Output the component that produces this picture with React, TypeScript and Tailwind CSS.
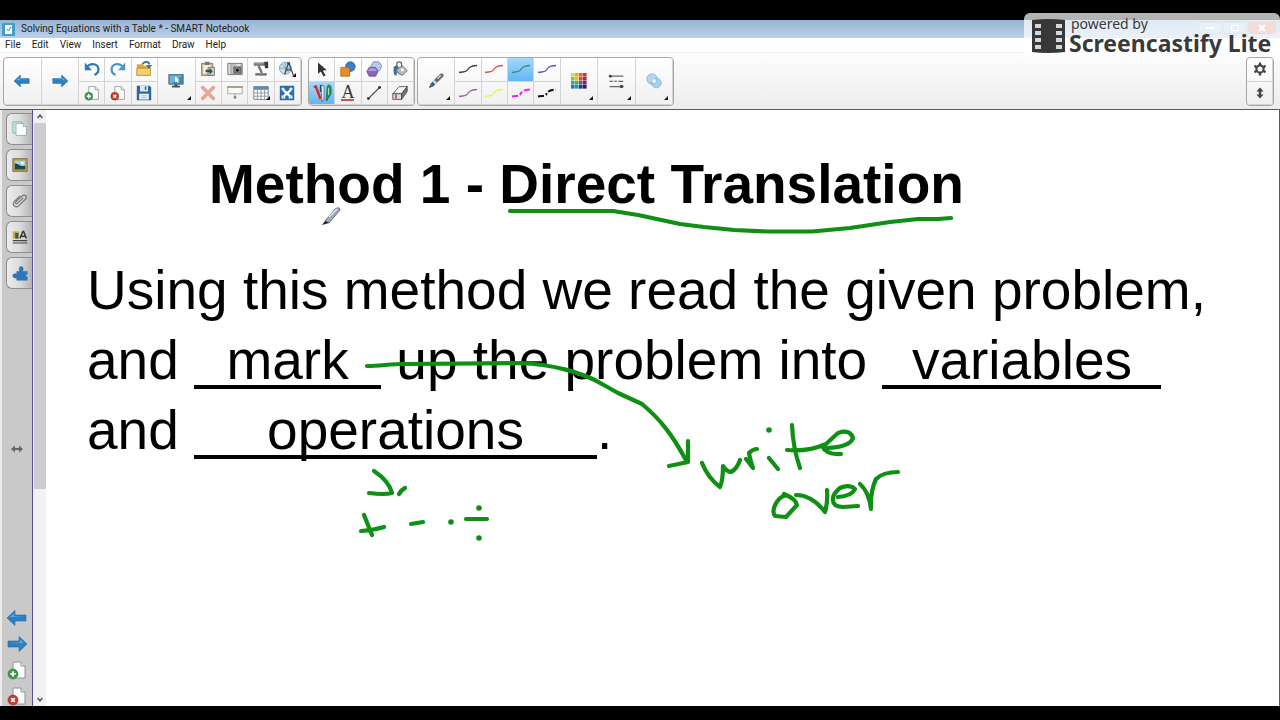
import React from 'react'

const MENUS = ['File', 'Edit', 'View', 'Insert', 'Format', 'Draw', 'Help']

const PENS = [
  { name: 'Black pen', color: '#3f3f3f' },
  { name: 'Purple pen', color: '#9a5fae' },
  { name: 'Red pen', color: '#e0524a' },
  { name: 'Yellow pen', color: '#eeee58' },
  { name: 'Green pen', color: '#2b9683', active: true },
  { name: 'Magenta dashed pen', color: '#ee22e4', dash: '6 2 4 2' },
  { name: 'Blue pen', color: '#5a50d8' },
  { name: 'Black dashed pen', color: '#111111', dash: '6 2 2 2' },
]

const PALETTE = [
  '#e8d32c', '#f0a030', '#e8662c', '#d03038',
  '#8cc83c', '#e8c040', '#d84848', '#a82850',
  '#30a8a0', '#40b060', '#8848a0', '#702878',
  '#2870c0', '#2890c8', '#283890', '#301860',
]

type IconProps = { children: React.ReactNode; size?: 'sm' | 'lg' }

function Icon({ children, size = 'sm' }: IconProps) {
  return (
    <svg viewBox="0 0 20 20" aria-hidden="true" className={size === 'lg' ? 'w-5 h-5' : 'w-4 h-4'}>
      {children}
    </svg>
  )
}

function Arrow({ flip = false, size }: { flip?: boolean; size?: 'sm' | 'lg' }) {
  return (
    <Icon size={size}>
      <path
        d={flip ? 'M20 10 12 2.500V7H1v6h11v4.500z' : 'M0 10 8 2.500V7h11v6H8v4.500z'}
        fill="#2e7fc4"
        stroke="#2468a4"
        strokeWidth=".6"
      />
      <path d={flip ? 'M2 8.300h11V5.500l3.500 3.500z' : 'M18 8.300H7V5.500L3 9z'} fill="#67aee0" />
    </Icon>
  )
}

function PageIcon({ remove = false, size }: { remove?: boolean; size?: 'sm' | 'lg' }) {
  return (
    <Icon size={size}>
      <path d="M6 2h8l4 4v12H6z" fill="#fdfdfd" stroke="#8b949a" />
      <path d="M14 2v4h4" fill="#e4e8ea" stroke="#8b949a" />
      <circle cx="6" cy="14" r="5" fill={remove ? '#c8392f' : '#3c9a50'} stroke={remove ? '#9f2c26' : '#2c7a3c'} strokeWidth=".6" />
      <path
        d={remove ? 'M4.200 12.200l3.600 3.600M7.800 12.200l-3.600 3.600' : 'M6 11.200v5.600M3.200 14h5.600'}
        stroke="#fff"
        strokeWidth="1.700"
      />
    </Icon>
  )
}

function Cell({ label, big, active, more, children }: {
  label: string
  big?: boolean
  active?: boolean
  more?: boolean
  children: React.ReactNode
}) {
  return (
    <button
      type="button"
      aria-label={label}
      className={`relative flex items-center justify-center border-r border-b border-[#d4d4d4] ${
        big ? 'row-span-2' : ''
      } ${active ? 'bg-gradient-to-b from-[#a4d8fa] to-[#62b6f4]' : ''}`}
    >
      {children}
      {more && (
        <svg viewBox="0 0 4 4" aria-hidden="true" className="absolute right-1 bottom-1 w-1 h-1">
          <path d="M4 0v4H0z" fill="#111" />
        </svg>
      )}
    </button>
  )
}

const GROUP = 'grid grid-flow-col grid-rows-2 h-[49px] shrink-0 overflow-hidden rounded border border-[#a6a6a6] bg-gradient-to-b from-white to-[#f0f0f0]'

function FileTools() {
  return (
    <div className={`${GROUP} w-[299px] grid-cols-[37fr_37fr_26fr_26fr_26fr_37fr_26fr_26fr_26fr_26fr]`}>
      <Cell label="Previous page" big><Arrow /></Cell>
      <Cell label="Next page" big><Arrow flip /></Cell>
      <Cell label="Undo">
        <Icon>
          <path d="M4 7C8.500 1.500 18 3.500 18 10.500c0 3-2 5.500-5 7" fill="none" stroke="#2e78b8" strokeWidth="2.800" />
          <path d="M1 2v9.500h9z" fill="#2e78b8" />
        </Icon>
      </Cell>
      <Cell label="Add page"><PageIcon /></Cell>
      <Cell label="Redo">
        <Icon>
          <path d="M16 7C11.500 1.500 2 3.500 2 10.500c0 3 2 5.500 5 7" fill="none" stroke="#4a94cc" strokeWidth="2.800" />
          <path d="M19 2v9.500h-9z" fill="#4a94cc" />
        </Icon>
      </Cell>
      <Cell label="Delete page"><PageIcon remove /></Cell>
      <Cell label="Open">
        <Icon>
          <path d="M1 4h7l2 2h7v12H1z" fill="#d9a83c" />
          <path d="M1 9h17v9H1z" fill="#f4d36c" stroke="#b98a2c" />
          <path d="M8 4c3-4 7-4 9 0" fill="none" stroke="#2e78b8" strokeWidth="2.400" />
          <path d="M12.500 5H20l-3.500 5z" fill="#2e78b8" />
        </Icon>
      </Cell>
      <Cell label="Save">
        <Icon>
          <path d="M1 1h16l2 2v16H1z" fill="#2f669c" />
          <path d="M5 1h10v7H5z" fill="#dce9f4" />
          <path d="M11 2h2v4h-2z" fill="#2f669c" />
          <path d="M4 11h12v7H4z" fill="#f4f7fa" />
          <path d="M6 13.500h8M6 16h8" stroke="#9ab4cc" />
        </Icon>
      </Cell>
      <Cell label="View screens" big more>
        <Icon>
          <path d="M1 2h18v12H1z" fill="#3e88b4" stroke="#4d6270" />
          <path d="M2 3h16L5 13H2z" fill="#71b3d6" />
          <path d="M9 4v8l2-1.500 1 2 1.500-1-1-2h2z" fill="#fff" />
          <path d="M8 14h4v2h3v2H5v-2h3z" fill="#41525e" />
        </Icon>
      </Cell>
      <Cell label="Paste">
        <Icon>
          <path d="M2 3h14v15H2z" fill="#cdb78e" stroke="#7d6c50" />
          <path d="M4 5h10v11H4z" fill="#f2efe6" />
          <path d="M6 1h6v4H6z" fill="#777" />
          <path d="M10 8h8v10h-8z" fill="#c9d2ca" stroke="#666" />
          <path d="M7 11h5V8.500l4 4.500-4 4v-3H7z" fill="#3d4b40" />
        </Icon>
      </Cell>
      <Cell label="Delete">
        <Icon>
          <path d="M2 2l16 16M18 2L2 18" stroke="#e6a498" strokeWidth="4.400" />
        </Icon>
      </Cell>
      <Cell label="Screen capture">
        <Icon>
          <path d="M1 3h18v14H1z" fill="#bdbdbd" stroke="#666" />
          <path d="M2 4h4v12H2z" fill="#e2e2e2" />
          <path d="M5 4v12" stroke="#777" />
          <path d="M8 7h10v9H8z" fill="#6a6a6a" />
          <circle cx="13" cy="11.500" r="2.600" fill="#191919" stroke="#aaa" />
          <path d="M12 4h5v2h-5z" fill="#eee" />
        </Icon>
      </Cell>
      <Cell label="Screen shade">
        <Icon>
          <path d="M1 2h18v9H1z" fill="#fafafa" stroke="#9a9a88" />
          <path d="M0 2.500h20" stroke="#a8a48c" strokeWidth="2.400" />
          <path d="M10 11v5" stroke="#888" />
          <path d="M8.500 14h3v3h-3z" fill="#777" />
        </Icon>
      </Cell>
      <Cell label="Document camera">
        <Icon>
          <path d="M1 2h17v4H1z" fill="#6e6e6e" />
          <path d="M14 1h5v8h-4z" fill="#3a3a3a" />
          <path d="M7 6l4 9" stroke="#777" strokeWidth="3" />
          <path d="M3 15h14v3H3z" fill="#5a5a5a" />
          <path d="M2 3.500h11M4 16h12" stroke="#b8b8b8" />
        </Icon>
      </Cell>
      <Cell label="Table" more>
        <Icon>
          <path d="M1 2h18v16H1z" fill="#fff" stroke="#66747e" />
          <path d="M1 2h18v4H1z" fill="#5b8bb2" />
          <path d="M1 10h18M1 14h18M5.500 2v16M10 2v16M14.500 2v16" stroke="#7c8b96" />
        </Icon>
      </Cell>
      <Cell label="Measurement tools" more>
        <Icon>
          <circle cx="8" cy="9" r="7.500" fill="#c9e0ee" stroke="#6c9ab8" />
          <path d="M1 9h14M8 2v14M4 4l8 10" stroke="#7ba6c2" />
          <path d="M12 2L7 17M12 2l6 16M9 11h7" fill="none" stroke="#3f4a52" strokeWidth="1.600" />
          <circle cx="12" cy="3" r="1.800" fill="#444" />
        </Icon>
      </Cell>
      <Cell label="SMART Exchange">
        <Icon>
          <path d="M1 1h18v18H1z" fill="#2f6da6" />
          <path d="M5.500 6.500l9 8M14.500 6.500l-9 8" stroke="#fff" strokeWidth="3" />
          <circle cx="5" cy="5" r="2" fill="#e8f2fa" />
          <circle cx="15" cy="5" r="2" fill="#e8f2fa" />
          <path d="M4 13v3h4M16 13v3h-4" fill="none" stroke="#fff" strokeWidth="1.600" />
        </Icon>
      </Cell>
    </div>
  )
}

function DrawTools() {
  return (
    <div className={`${GROUP} w-[107px] grid-cols-4`}>
      <Cell label="Select">
        <Icon>
          <path d="M5 2v14l3.500-3L12 19.500l2.500-1.500-3.500-6 5-.5z" fill="#333" />
        </Icon>
      </Cell>
      <Cell label="Pens" active>
        <Icon size="lg">
          <path d="M3 2.500L8 16" stroke="#b8323c" strokeWidth="3.400" />
          <path d="M2.500 5l4 11" stroke="#f0c8cc" />
          <path d="M9 2l3 1v13l-2 3z" fill="#eef2f6" stroke="#5a6676" strokeWidth=".8" />
          <path d="M8.500 2v7" stroke="#2c4a6c" strokeWidth="1.400" />
          <path d="M15 5c0-4 4-4 4 0v6l-4.500 7z" fill="#249a5c" stroke="#12623a" strokeWidth=".8" />
          <path d="M16.500 5v7" stroke="#9ae4ba" />
        </Icon>
      </Cell>
      <Cell label="Shapes">
        <Icon>
          <circle cx="13" cy="7" r="6" fill="#3a80c0" stroke="#2a5f94" />
          <path d="M1 8h11v11H1z" fill="#ee8a28" stroke="#b8601c" />
        </Icon>
      </Cell>
      <Cell label="Text">
        <span className="border-b-2 border-[#cc5450] font-['Liberation_Serif',serif] text-[18px] leading-[14px] text-[#383838]">A</span>
      </Cell>
      <Cell label="Regular polygons">
        <Icon>
          <path d="M9 1h7l4 5-3 6h-7L6 7z" fill="#b9c8ec" stroke="#7083b8" />
          <path d="M4 8h8l3 5-3 6H4l-3-6z" fill="#8a68b8" stroke="#644a92" />
          <path d="M4.500 9h7l2 3.500h-11z" fill="#b49ad8" />
        </Icon>
      </Cell>
      <Cell label="Line">
        <Icon>
          <path d="M3 17L17 3" stroke="#444" strokeWidth="1.600" />
          <circle cx="3" cy="17" r="1.800" fill="#333" />
          <circle cx="17" cy="3" r="1.800" fill="#333" />
        </Icon>
      </Cell>
      <Cell label="Fill">
        <Icon>
          <path d="M6 8V4a3 3 0 016 0v5" fill="none" stroke="#666" strokeWidth="1.600" />
          <path d="M6 10l7-4 6 6-6 6-6-3z" fill="#b4babd" stroke="#5c6468" />
          <circle cx="13" cy="11" r="2" fill="#f2f4f5" />
          <path d="M2 8c3-4 7-2 6 1l-2 1v8c-3 0-4-2-4-5z" fill="#3f6e96" />
        </Icon>
      </Cell>
      <Cell label="Eraser">
        <Icon>
          <path d="M1 11L9 2h10l-7 9z" fill="#f2f2f2" stroke="#444" />
          <path d="M1 11h11v7H1z" fill="#ddd" stroke="#444" />
          <path d="M12 11l7-9v6l-7 10z" fill="#777" stroke="#444" />
          <path d="M5 12v5" stroke="#b5483c" strokeWidth="2" />
        </Icon>
      </Cell>
    </div>
  )
}

function PenTools() {
  return (
    <div className={`${GROUP} w-[257px] grid-cols-[37fr_26fr_26fr_26fr_26fr_37fr_37fr_37fr]`}>
      <Cell label="Pen" big more>
        <Icon>
          <path d="M4.500 15.500L14 6" stroke="#2d5c96" strokeWidth="4.600" />
          <path d="M11 9l6-6" stroke="#6a6a6a" strokeWidth="5" strokeLinecap="round" />
          <path d="M12 7l4-4" stroke="#e4e4e4" strokeWidth="1.600" />
          <path d="M7 10l3 3" stroke="#dfe6ee" strokeWidth="3" />
          <path d="M1 19l2-5 3 3z" fill="#555" />
        </Icon>
      </Cell>
      {PENS.map((pen) => (
        <Cell key={pen.name} label={pen.name} active={pen.active}>
          <svg viewBox="0 0 20 10" aria-hidden="true" className="w-5 h-[10px]">
            <path
              d="M1 8.500c4-1 7 0 8.500-2.500S12 2 19 1.500"
              fill="none"
              stroke={pen.color}
              strokeWidth={pen.dash ? 2 : 1.4}
              strokeDasharray={pen.dash}
            />
          </svg>
        </Cell>
      ))}
      <Cell label="Colour" big more>
        <svg viewBox="0 0 16 16" aria-hidden="true" className="w-4 h-4">
          {PALETTE.map((c, i) => (
            <rect key={i} x={(i % 4) * 4} y={Math.floor(i / 4) * 4} width="3.600" height="3.600" fill={c} />
          ))}
        </svg>
      </Cell>
      <Cell label="Line style" big more>
        <Icon>
          <path d="M2 4h17M2 10.500h17M2 17h17" stroke="#666" strokeWidth="1.600" />
          <circle cx="3" cy="4" r="1.800" fill="#444" />
          <circle cx="17" cy="17" r="2.200" fill="#444" />
          <path d="M6 10.500h2M11 10.500h2" stroke="#fff" strokeWidth="1.800" />
        </Icon>
      </Cell>
      <Cell label="Transparency" big more>
        <Icon>
          <circle cx="7.500" cy="7.500" r="6.500" fill="#b4d6ea" stroke="#86b4d2" />
          <circle cx="13" cy="12.500" r="6" fill="#8fc4e2" fillOpacity=".75" stroke="#86b4d2" />
          <circle cx="10" cy="10" r="2.600" fill="#e2f2fa" />
        </Icon>
      </Cell>
    </div>
  )
}

function Tab({ label, children }: { label: string; children: React.ReactNode }) {
  return (
    <button
      type="button"
      aria-label={label}
      className="flex items-center justify-center w-[26px] h-8 rounded-l-md border border-r-0 border-[#8e8e8e] bg-gradient-to-r from-[#ececec] via-[#dcdcdc] to-[#b4b4b4]"
    >
      {children}
    </button>
  )
}

function Sidebar() {
  return (
    <aside className="flex flex-col items-end w-[33px] shrink-0 border-l-2 border-r border-l-[#ededed] border-r-[#54509a] bg-[#c9c9c9] pt-[3px]">
      <div className="flex flex-col gap-1">
        <Tab label="Page sorter">
          <Icon>
            <path d="M1 1h11v14H1z" fill="#c4e4ea" stroke="#83abb4" />
            <path d="M5 3h9l4 4v11H5z" fill="#fff" stroke="#8aa2aa" />
            <path d="M14 3v4h4" fill="#dfe8ea" stroke="#8aa2aa" />
          </Icon>
        </Tab>
        <Tab label="Gallery">
          <Icon>
            <path d="M1 2h18v16H1z" fill="#b59a58" stroke="#7c6838" />
            <path d="M3.500 4.500h13v11h-13z" fill="#a8d0e4" />
            <path d="M3.500 8c5 0 6 4 13 3v4.500h-13z" fill="#1d4a44" />
            <circle cx="13" cy="7.500" r="1.500" fill="#fff" />
          </Icon>
        </Tab>
        <Tab label="Attachments">
          <Icon>
            <path
              d="M14 6l-7 7c-1.500 1.500-3.500-.5-2-2l8-7.500c3-2.500 6.500 1 4 4l-8.500 8.500c-4 3.500-9-1-5.500-5.500L10 3.500"
              fill="none"
              stroke="#777"
              strokeWidth="1.500"
            />
          </Icon>
        </Tab>
        <Tab label="Properties">
          <Icon>
            <path d="M1 3h8v9H1z" fill="#c2ad48" />
            <path d="M4 5h4v7H4z" fill="#41546a" />
            <path d="M10 12l3.500-9h1L18 12M11.500 9h5" fill="none" stroke="#333" strokeWidth="1.800" />
            <path d="M1 14.500h18M1 17.500h18" stroke="#444" strokeWidth="1.400" />
          </Icon>
        </Tab>
        <Tab label="Add-ons">
          <Icon>
            <path
              d="M6 8h4C8 4.500 9.500 2 11.500 2S15 4.500 13 8h6v4c-3-1-3 3 0 2.500V19H6v-3.500c-2 1.500-5 .5-5-2S4 10 6 11.500z"
              fill="#2f77b8"
              stroke="#235c92"
              strokeWidth=".6"
            />
          </Icon>
        </Tab>
      </div>
      <div className="flex flex-1 items-center self-center">
        <svg viewBox="0 0 12 8" aria-hidden="true" className="w-3 h-2">
          <path d="M0 4l4-3.500V3h4V.5L12 4 8 7.500V5H4v2.500z" fill="#666" />
        </svg>
      </div>
      <div className="flex flex-col gap-[6px] self-center">
        <button type="button" aria-label="Back"><Arrow size="lg" /></button>
        <button type="button" aria-label="Forward"><Arrow flip size="lg" /></button>
        <button type="button" aria-label="Insert page"><PageIcon size="lg" /></button>
        <button type="button" aria-label="Remove page"><PageIcon remove size="lg" /></button>
      </div>
    </aside>
  )
}

function ScrollBar() {
  return (
    <div className="flex flex-col items-center w-[13px] shrink-0 bg-[#f1f1f1] pl-px">
      <svg viewBox="0 0 12 13" aria-hidden="true" className="w-3 h-[13px] shrink-0">
        <path d="M3.500 8L6 5.200 8.500 8" fill="none" stroke="#555" strokeWidth="1.500" />
      </svg>
      <div className="w-full basis-[366px] bg-[#cdcdcd]" />
      <div className="flex-1" />
      <svg viewBox="0 0 12 13" aria-hidden="true" className="w-3 h-[13px] shrink-0">
        <path d="M3.500 5L6 7.800 8.500 5" fill="none" stroke="#555" strokeWidth="1.500" />
      </svg>
    </div>
  )
}

// Pen strokes drawn on top of the slide
function Ink() {
  return (
    <svg viewBox="46 110 1233 596" aria-hidden="true" className="absolute left-0 top-0 w-[1233px] h-[596px] pointer-events-none">
      <g fill="none" stroke="#0f8f14" strokeWidth="4.200" strokeLinecap="round" strokeLinejoin="round">
        <path d="M510 211H613L638 215L680 224L704 227L734 230L768 231.500H812L850 228L890 222L918 219L938 219L951 218" />
        <path d="M367 366C380 366 390 364 404 364L520 363C550 364 582 372 602 384L618 393L642 404C660 419 672 434 687 462" />
        <path d="M688 441L688 462L669 466" />
        <path d="M374 471Q389 481 392 493Q385 495 369 493M399 494Q401 490 405 488" />
        <path d="M364 515L372 535M361 531Q374 530 384 527M411 524L423 522M466 519H487" />
        <path d="M702 463Q708 478 720 487Q723 480 723 466Q727 472 731 472Q737 469 740 460M746 459L753 468Q750 459 749 453Q753 449 757 449M769 458L778 469" />
        <path d="M792 425Q793 448 800 468M787 450Q808 452 826 444L838 433Q850 429 853 438Q850 447 827 448M822 446Q826 455 841 454" />
        <path d="M786 495C776 498 771 511 775 516L786 517L797 505Q796 499 784 494M796 495Q812 495 825 512Q828 502 827 490" />
        <path d="M838 497Q852 496 855 489Q849 484 840 488C830 496 830 507 843 507L858 506M860 484Q869 492 871 509Q870 492 876 479Q883 472 898 472" />
      </g>
      <g fill="#0f8f14">
        <circle cx="451" cy="522" r="2.800" />
        <circle cx="479" cy="508" r="2.800" />
        <circle cx="479" cy="538" r="2.800" />
        <circle cx="769" cy="430" r="2.800" />
      </g>
      {/* pen cursor */}
      <path d="M325 221l10-12q5-3 5 1l-11 13z" fill="#9ba8bc" stroke="#55585f" strokeWidth=".8" />
      <path d="M322 225l3-4 4 2z" fill="#222" />
      <path d="M329 217l8-8" stroke="#e4eaf2" strokeWidth="1.500" />
    </svg>
  )
}

function Blank({ width, children }: { width: string; children: string }) {
  return (
    <span className={`inline-block border-b-4 border-black text-center leading-[50px] ${width}`}>
      {children}
    </span>
  )
}

function Slide() {
  return (
    <main className="relative flex-1 overflow-hidden bg-white pl-[41px] pt-[39px] whitespace-nowrap text-[55px] leading-[70px] text-black font-['Liberation_Sans',Arial,sans-serif]">
      <h1 className="pl-[122px] font-bold">Method 1 - Direct Translation</h1>
      <div className="pt-9">
        <p>Using this method we read the given problem,</p>
        <p className="h-[70px]">
          and <Blank width="w-[187px]">mark</Blank> up the problem into <Blank width="w-[279px]">variables</Blank>
        </p>
        <p className="h-[70px]">
          and <Blank width="w-[403px]">operations</Blank>.
        </p>
      </div>
      <Ink />
    </main>
  )
}

function Watermark() {
  return (
    <div className="absolute right-0 top-[13px] flex h-[42px] w-64 items-start gap-1 rounded-t-md bg-white/70 pl-2 pt-1 text-[#3a3a3a]">
      <svg viewBox="0 0 33 34" aria-hidden="true" className="mt-[2px] h-[34px] w-[33px] shrink-0">
        <path d="M0 1Q16 -1 33 1V33Q16 35 0 33z" fill="#383838" />
        <path d="M3 5h6v4H3zM3 12h6v4H3zM3 19h6v4H3zM3 26h6v4H3zM24 5h6v4h-6zM24 12h6v4h-6zM24 19h6v4h-6zM24 26h6v4h-6z" fill="#d4d8da" />
      </svg>
      <div className="whitespace-nowrap">
        <div className="pl-[2px] text-[14px] leading-[14px]">powered by</div>
        <div className="text-[23px] font-bold leading-[24px]">Screencastify Lite</div>
      </div>
    </div>
  )
}

export default function App() {
  return (
    <div className="relative flex min-h-screen flex-col overflow-hidden bg-black pt-5 pb-[14px] font-['Noto_Sans','Open_Sans',sans-serif] text-[#222]">
      <header className="flex h-[18px] items-center gap-[6px] bg-gradient-to-b from-[#98b4d6] to-[#bdd0e8] pl-[2px]">
        <svg viewBox="0 0 13 13" aria-hidden="true" className="h-[13px] w-[13px]">
          <path d="M0 0h13v13H0z" fill="#3fa0cc" />
          <path d="M3 2h7v9H3z" fill="#fff" />
          <path d="M5 6l1.500 2L9 4" fill="none" stroke="#3f88b4" />
        </svg>
        <span className="font-[Roboto,sans-serif] text-[10px] leading-4">Solving Equations with a Table * - SMART Notebook</span>
        <div className="ml-auto flex gap-px self-start pr-1 pt-[2px]">
          <button type="button" aria-label="Minimize" className="flex h-3 w-6 items-center justify-center rounded-b border border-[#9fb2cc] bg-[#b9cce4]">
            <span className="h-[2px] w-2 bg-white" />
          </button>
          <button type="button" aria-label="Restore" className="flex h-3 w-6 items-center justify-center rounded-b border border-[#9fb2cc] bg-[#b9cce4]">
            <span className="h-[6px] w-2 border border-white" />
          </button>
          <button type="button" aria-label="Close" className="flex h-3 w-7 items-center justify-center rounded-b border border-[#c09088] bg-[#dc8a7a]">
            <svg viewBox="0 0 8 8" aria-hidden="true" className="h-2 w-2">
              <path d="M1 1l6 6M7 1L1 7" stroke="#fff" strokeWidth="2" />
            </svg>
          </button>
        </div>
      </header>

      <nav className="flex h-[15px] items-center gap-[11px] border-b border-[#f0f0f0] bg-white pl-[5px] font-[Roboto,sans-serif] text-[10px] leading-[14px]">
        {MENUS.map((m) => <button type="button" key={m}>{m}</button>)}
      </nav>

      <div className="flex items-start border-b border-[#54509a] bg-gradient-to-b from-[#fdfdfd] to-[#ededed] px-[3px] pb-[3px] pt-1">
        <FileTools />
        <div className="ml-[6px]"><DrawTools /></div>
        <div className="ml-[2px]"><PenTools /></div>
        <div className={`${GROUP} ml-auto mr-[3px] w-7`}>
          <Cell label="Settings">
            <Icon>
              <circle cx="10" cy="10" r="4.500" fill="none" stroke="#444" strokeWidth="2.600" />
              <path d="M10 2v3M10 15v3M3 6l2.600 1.500M14.400 12.500L17 14M17 6l-2.600 1.500M5.600 12.500L3 14" stroke="#444" strokeWidth="2.800" />
            </Icon>
          </Cell>
          <Cell label="Move toolbar">
            <Icon>
              <path d="M10 3l4.500 5h-3v4h3L10 17l-4.500-5h3V8h-3z" fill="#444" />
            </Icon>
          </Cell>
        </div>
      </div>

      <div className="flex flex-1 border-r border-[#54509a]">
        <Sidebar />
        <ScrollBar />
        <Slide />
      </div>

      <Watermark />
    </div>
  )
}
